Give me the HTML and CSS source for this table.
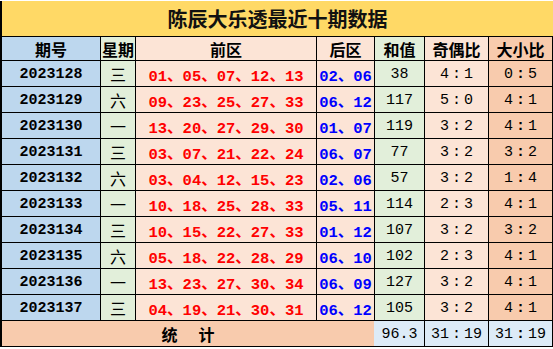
FILE: index.html
```html
<!DOCTYPE html>
<html lang="zh">
<head>
<meta charset="utf-8">
<link rel="stylesheet" href="styles.css">
</head>
<body>
<div class="sheet">
  <div class="title">陈辰大乐透最近十期数据</div>
  <div class="grid">
    <div class="c h blue">期号</div>
    <div class="c h green">星期</div>
    <div class="c h peach">前区</div>
    <div class="c h peach">后区</div>
    <div class="c h green">和值</div>
    <div class="c h peach">奇偶比</div>
    <div class="c h salmon">大小比</div>

    <div class="c blue id">2023128</div><div class="c green wd">三</div><div class="c peach fr">01、05、07、12、13</div><div class="c peach bk">02、06</div><div class="c green n">38</div><div class="c peach n">4<span class="col">:</span>1</div><div class="c salmon n">0<span class="col b">:</span>5</div>
    <div class="c blue id">2023129</div><div class="c green wd">六</div><div class="c peach fr">09、23、25、27、33</div><div class="c peach bk">06、12</div><div class="c green n">117</div><div class="c peach n">5<span class="col">:</span>0</div><div class="c salmon n">4<span class="col b">:</span>1</div>
    <div class="c blue id">2023130</div><div class="c green wd">一</div><div class="c peach fr">13、20、27、29、30</div><div class="c peach bk">01、07</div><div class="c green n">119</div><div class="c peach n">3<span class="col">:</span>2</div><div class="c salmon n">4<span class="col b">:</span>1</div>
    <div class="c blue id">2023131</div><div class="c green wd">三</div><div class="c peach fr">03、07、21、22、24</div><div class="c peach bk">06、07</div><div class="c green n">77</div><div class="c peach n">3<span class="col">:</span>2</div><div class="c salmon n">3<span class="col b">:</span>2</div>
    <div class="c blue id">2023132</div><div class="c green wd">六</div><div class="c peach fr">03、04、12、15、23</div><div class="c peach bk">02、06</div><div class="c green n">57</div><div class="c peach n">3<span class="col">:</span>2</div><div class="c salmon n">1<span class="col b">:</span>4</div>
    <div class="c blue id">2023133</div><div class="c green wd">一</div><div class="c peach fr">10、18、25、28、33</div><div class="c peach bk">05、11</div><div class="c green n">114</div><div class="c peach n">2<span class="col">:</span>3</div><div class="c salmon n">4<span class="col b">:</span>1</div>
    <div class="c blue id">2023134</div><div class="c green wd">三</div><div class="c peach fr">10、15、22、27、33</div><div class="c peach bk">01、12</div><div class="c green n">107</div><div class="c peach n">3<span class="col">:</span>2</div><div class="c salmon n">3<span class="col b">:</span>2</div>
    <div class="c blue id">2023135</div><div class="c green wd">六</div><div class="c peach fr">05、18、22、28、29</div><div class="c peach bk">06、10</div><div class="c green n">102</div><div class="c peach n">2<span class="col">:</span>3</div><div class="c salmon n">4<span class="col b">:</span>1</div>
    <div class="c blue id">2023136</div><div class="c green wd">一</div><div class="c peach fr">13、23、27、30、34</div><div class="c peach bk">06、09</div><div class="c green n">127</div><div class="c peach n">3<span class="col">:</span>2</div><div class="c salmon n">4<span class="col b">:</span>1</div>
    <div class="c blue id">2023137</div><div class="c green wd">三</div><div class="c peach fr">04、19、21、30、31</div><div class="c peach bk">06、12</div><div class="c green n">105</div><div class="c peach n">3<span class="col">:</span>2</div><div class="c salmon n">4<span class="col b">:</span>1</div>

    <div class="c salmon total"><span>统</span><span>计</span></div>
    <div class="c light n sum">96.3</div>
    <div class="c light n">31<span class="col">:</span>19</div>
    <div class="c light n">31<span class="col b">:</span>19</div>
  </div>
</div>
</body>
</html>
```

FILE: styles.css
```css
* { box-sizing: border-box; }
html, body { margin: 0; padding: 0; background: #ffffff; }
body { width: 553px; height: 349px; overflow: hidden; }

.sheet { padding-top: 1px; width: 553px; }

.title {
  height: 35px;
  background: #ffd966;
  border-left: 2px solid #000;
  display: flex;
  align-items: center;
  justify-content: center;
  font-family: "Noto Sans CJK SC", sans-serif;
  font-weight: 700;
  font-size: 20px;
  color: #111;
}

.grid {
  display: grid;
  grid-template-columns: 98px 34px 180px 57px 49px 63px 63px;
  grid-template-rows: 23px repeat(11, 25px);
  gap: 1px;
  background: #000;
  padding: 1px 1px 1px 2px;
  width: 553px;
}

.c {
  display: flex;
  align-items: center;
  justify-content: center;
  white-space: nowrap;
  font-family: "Liberation Mono", "Noto Sans CJK SC", monospace;
  font-size: 15px;
  color: #000;
  overflow: hidden;
}

.blue { background: #bdd7ee; }
.green { background: #e2efda; }
.peach { background: #fce4d6; }
.salmon { background: #f8cbad; }
.light { background: #ddebf7; }

.h {
  font-family: "Noto Sans CJK SC", sans-serif;
  font-weight: 700;
  font-size: 16px;
}

.id { font-weight: 700; padding-top: 2px; }
.wd {
  font-family: "Noto Sans CJK SC", sans-serif;
  font-size: 16px;
}
.fr {
  color: #ff0000;
  font-weight: 700;
  font-size: 15.5px;
  padding-top: 2px;
}
.bk {
  color: #0000ff;
  font-weight: 700;
  font-size: 15.5px;
  padding-top: 2px;
}
.n { padding-top: 2px; }

.col { padding: 0 3px; }
.col.b { font-weight: 700; }

.total {
  grid-column: 1 / span 4;
  gap: 21px;
  font-family: "Noto Sans CJK SC", sans-serif;
  font-weight: 700;
  font-size: 16px;
}
.sum { box-shadow: -1px 0 0 #ddebf7; }
```
